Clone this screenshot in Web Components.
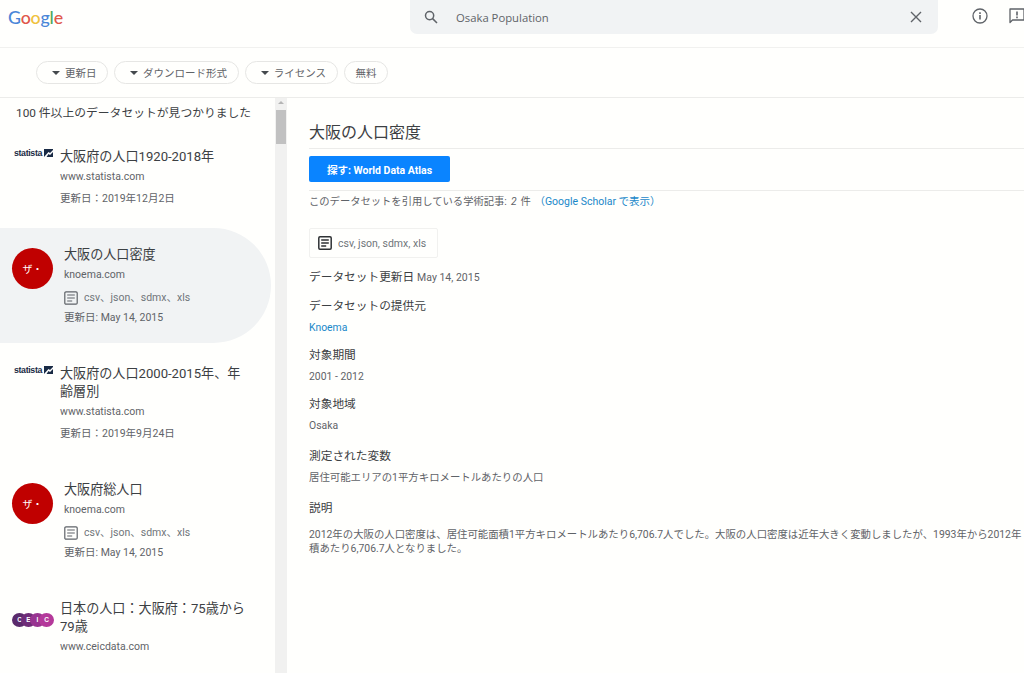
<!DOCTYPE html>
<html lang="ja">
<head>
<meta charset="utf-8">
<title>Dataset Search</title>
<style>
  html, body { margin: 0; height: 100%; overflow: hidden; background: #fffffd; }
  body {
    display: flex;
    flex-direction: column;
    font-family: Roboto, "Noto Sans CJK JP", sans-serif;
    color: #5f6368;
  }
</style>
</head>
<body>
<ds-header query="Osaka Population"></ds-header>
<ds-filter-bar>
  <ds-chip arrow>更新日</ds-chip>
  <ds-chip arrow>ダウンロード形式</ds-chip>
  <ds-chip arrow>ライセンス</ds-chip>
  <ds-chip>無料</ds-chip>
</ds-filter-bar>
<ds-main>
  <ds-result-list slot="list" count="100 件以上のデータセットが見つかりました">
    <ds-result logo="statista" title-text="大阪府の人口1920-2018年" url="www.statista.com" date="更新日：2019年12月2日" style="--top:22px;--bottom:22px;--right:21px"></ds-result>
    <ds-result logo="knoema" selected title-text="大阪の人口密度" url="knoema.com" formats="csv、json、sdmx、xls" date="更新日: May 14, 2015"></ds-result>
    <ds-result logo="statista" title-text="大阪府の人口2000-2015年、年齢層別" url="www.statista.com" date="更新日：2019年9月24日" style="--top:22px;--bottom:22px;--right:21px"></ds-result>
    <ds-result logo="knoema" title-text="大阪府総人口" url="knoema.com" formats="csv、json、sdmx、xls" date="更新日: May 14, 2015"></ds-result>
    <ds-result logo="ceic" title-text="日本の人口：大阪府：75歳から79歳" url="www.ceicdata.com" style="--top:22px;--bottom:22px;--right:21px"></ds-result>
  </ds-result-list>
  <ds-scrollbar slot="list"></ds-scrollbar>
  <ds-detail slot="detail" heading="大阪の人口密度">
    <ds-field label="データセットの提供元" link style="--gap:6px;--after:11px">Knoema</ds-field>
    <ds-field label="対象期間" style="--gap:6px;--after:11px">2001 - 2012</ds-field>
    <ds-field label="対象地域" style="--gap:6px;--after:14px">Osaka</ds-field>
    <ds-field label="測定された変数" style="--gap:6px;--after:14px">居住可能エリアの1平方キロメートルあたりの人口</ds-field>
    <ds-field label="説明" style="--gap:11px;--after:0px">2012年の大阪の人口密度は、居住可能面積1平方キロメートルあたり6,706.7人でした。大阪の人口密度は近年大きく変動しましたが、1993年から2012年<br>積あたり6,706.7人となりました。</ds-field>
  </ds-detail>
</ds-main>

<script>
const DOC_ICON = (color, weight) => `<svg width="14" height="14" viewBox="0 0 14 14" fill="none" stroke="${color}" stroke-width="${weight}">
    <rect x="0.8" y="0.8" width="12.4" height="12.4" rx="1.2"/>
    <path d="M3.200 4h7.600M3.200 7h7.600M3.200 10h5"/>
  </svg>`;

class DsHeader extends HTMLElement {
  constructor() {
    super();
    const shadowRoot = this.attachShadow({mode: 'open'});
    shadowRoot.innerHTML = `
      <style>
        :host {
          display: flex;
          flex: 0 0 auto;
          height: 47px;
          border-bottom: 1px solid #f1f1ef;
          overflow: hidden;
        }
        #logo {
          flex: 0 0 auto;
          width: 410px;
          padding: 1px 0 0 8px;
          box-sizing: border-box;
          font: 500 17.800px/32px Lato, sans-serif;
          letter-spacing: -0.2px;
        }
        #search {
          flex: 0 0 auto;
          width: 528px;
          height: 34px;
          box-sizing: border-box;
          background: #f1f3f4;
          border-radius: 0 0 7px 7px;
          display: flex;
          align-items: center;
          padding: 0 14px;
          font: 11.300px "Open Sans", sans-serif;
          color: #5f6368;
        }
        #query { flex: 1 1 auto; padding-left: 18px; }
        #actions {
          flex: 0 0 auto;
          display: flex;
          gap: 21px;
          padding: 8px 0 0 34px;
          align-items: flex-start;
        }
        svg { display: block; flex: 0 0 auto; }
      </style>
      <div id="logo"><span style="color:#4a86d8">G</span><span style="color:#e0574a">o</span><span style="color:#efc23e">o</span><span style="color:#4a86d8">g</span><span style="color:#4fa85e">l</span><span style="color:#e0574a">e</span></div>
      <div id="search">
        <svg width="14" height="14" viewBox="0 0 14 14" fill="none" stroke="#5f6368" stroke-width="1.5"><circle cx="5.6" cy="5.6" r="4.1"/><path d="M8.600 8.600l4.400 4.400"/></svg>
        <span id="query"></span>
        <svg width="12" height="12" viewBox="0 0 12 12" fill="none" stroke="#5f6368" stroke-width="1.4" style="margin-right:2px"><path d="M1 1l10 10M11 1L1 11"/></svg>
      </div>
      <div id="actions">
        <svg width="16" height="16" viewBox="0 0 16 16" fill="none" stroke="#5f6368"><circle cx="8" cy="8" r="7" stroke-width="1.3"/><path d="M8 7v4.600" stroke-width="1.6"/><path d="M8 4.200v1.700" stroke-width="1.6"/></svg>
        <svg width="16" height="16" viewBox="0 0 16 16" fill="none" stroke="#5f6368"><path d="M1 1h14v11H3.500L1 14.500z" stroke-width="1.3" stroke-linejoin="round"/><path d="M8 3.400v4.200M8 8.600v1.600" stroke-width="1.6"/></svg>
      </div>`;
  }
  connectedCallback() {
    this.shadowRoot.querySelector('#query').textContent = this.getAttribute('query');
  }
}

class DsFilterBar extends HTMLElement {
  constructor() {
    super();
    const shadowRoot = this.attachShadow({mode: 'open'});
    shadowRoot.innerHTML = `
      <style>
        :host {
          display: flex;
          flex: 0 0 auto;
          height: 49px;
          align-items: center;
          gap: 6px;
          padding: 0 0 0 36px;
          border-bottom: 1px solid #ececea;
        }
      </style>
      <slot></slot>`;
  }
}

class DsChip extends HTMLElement {
  constructor() {
    super();
    const shadowRoot = this.attachShadow({mode: 'open'});
    shadowRoot.innerHTML = `
      <style>
        :host {
          display: inline-flex;
          align-items: center;
          height: 23px;
          box-sizing: border-box;
          padding: 0 10.600px 0 11px;
          border: 1px solid #e6e6e4;
          border-radius: 12px;
          font: 10.500px Roboto, "Noto Sans CJK JP", sans-serif;
          color: #5f6368;
          white-space: nowrap;
        }
        #arrow {
          width: 0;
          height: 0;
          margin: 0 5px 0 4px;
          border-left: 4px solid transparent;
          border-right: 4px solid transparent;
          border-top: 4px solid #45494d;
        }
        :host(:not([arrow])) #arrow { display: none; }
      </style>
      <span id="arrow"></span><slot></slot>`;
  }
}

class DsMain extends HTMLElement {
  constructor() {
    super();
    const shadowRoot = this.attachShadow({mode: 'open'});
    shadowRoot.innerHTML = `
      <style>
        :host {
          display: flex;
          flex: 1 1 auto;
          min-height: 0;
          overflow: hidden;
        }
      </style>
      <slot name="list"></slot><slot name="detail"></slot>`;
  }
}

class DsResultList extends HTMLElement {
  constructor() {
    super();
    const shadowRoot = this.attachShadow({mode: 'open'});
    shadowRoot.innerHTML = `
      <style>
        :host {
          display: block;
          flex: 0 0 275px;
          width: 275px;
          overflow: hidden;
        }
        #count {
          height: 28px;
          padding-left: 16px;
          font-size: 11.800px;
          line-height: 30px;
          color: #3c4043;
          white-space: nowrap;
        }
      </style>
      <div id="count"></div>
      <slot></slot>`;
  }
  connectedCallback() {
    this.shadowRoot.querySelector('#count').textContent = this.getAttribute('count');
  }
}

class DsResult extends HTMLElement {
  constructor() {
    super();
    const shadowRoot = this.attachShadow({mode: 'open'});
    shadowRoot.innerHTML = `
      <style>
        :host {
          display: flex;
          box-sizing: border-box;
          width: 271px;
          padding: var(--top, 18px) var(--right, 12px) var(--bottom, 18px) 0;
          border-radius: 0 58px 58px 0;
        }
        :host([selected]) { background: #f1f3f4; }
        #logo { flex: 0 0 auto; }
        #body { flex: 1 1 auto; min-width: 0; }
        #title {
          font-size: 13.100px;
          line-height: 18px;
          color: #3c4043;
        }
        .meta {
          font-size: 10.500px;
          line-height: 14px;
          color: #5f6368;
        }
        #url { margin-top: 4px; }
        #date { margin-top: 8px; }
        #formats {
          display: flex;
          align-items: center;
          margin-top: 9px;
          color: #70757a;
        }
        #formats svg { margin-right: 6px; }
        :host([formats]) #date { margin-top: 6px; }
        .statista {
          display: flex;
          align-items: center;
          margin: -1px 8px 0 14px;
          height: 10px;
          padding-top: 1px;
          width: 38px;
          font: 700 8.800px/10px "Liberation Sans", sans-serif;
          letter-spacing: -0.35px;
          color: #1a2b45;
        }
        .statista svg { margin-left: 1.500px; flex: 0 0 auto; }
        .knoema {
          width: 41px;
          height: 41px;
          margin: 2px 11px 0 12px;
          border-radius: 50%;
          background: #c00000;
          color: #fff;
          display: flex;
          align-items: center;
          justify-content: center;
          font: 10px/1 "Noto Sans CJK JP", sans-serif;
        }
        .ceic {
          display: flex;
          margin: 13px 8px 0 12px;
          width: 40px;
        }
        .ceic span {
          flex: 0 0 15px;
          height: 14px;
          margin-right: -6px;
          border-radius: 50%;
          color: #fff;
          font: 700 6.500px/14px "Liberation Sans", sans-serif;
          text-align: center;
        }
      </style>
      <div id="logo"></div>
      <div id="body">
        <div id="title"></div>
        <div id="url" class="meta"></div>
        <div id="formats" class="meta"></div>
        <div id="date" class="meta"></div>
      </div>`;
  }
  connectedCallback() {
    const root = this.shadowRoot;
    const logo = this.getAttribute('logo');
    const dlogo = root.querySelector('#logo');
    dlogo.className = logo;
    if(logo === 'statista') {
      dlogo.innerHTML = `statista<svg width="9" height="8" viewBox="0 0 9 8"><rect width="9" height="8" fill="#1a2b45"/><path d="M0 8l4.500-5 1.500 1L9 1v2L6 6 4.500 5 2.500 8z" fill="#fff"/></svg>`;
    }
    else if(logo === 'knoema') {
      dlogo.textContent = 'ザ・';
    }
    else {
      const colors = ['#5a2a6c', '#6f2c78', '#983490', '#b4399a'];
      dlogo.innerHTML = ['C', 'E', 'I', 'C'].map((c, i) => `<span style="background:${colors[i]}">${c}</span>`).join('');
    }
    root.querySelector('#title').textContent = this.getAttribute('title-text');
    root.querySelector('#url').textContent = this.getAttribute('url');
    const dformats = root.querySelector('#formats');
    if(this.hasAttribute('formats')) dformats.innerHTML = DOC_ICON('#5f6368', 1.2) + `<span>${this.getAttribute('formats')}</span>`;
    else dformats.remove();
    const ddate = root.querySelector('#date');
    if(this.hasAttribute('date')) ddate.textContent = this.getAttribute('date');
    else ddate.remove();
  }
}

class DsScrollbar extends HTMLElement {
  constructor() {
    super();
    const shadowRoot = this.attachShadow({mode: 'open'});
    shadowRoot.innerHTML = `
      <style>
        :host {
          display: block;
          flex: 0 0 12px;
          width: 12px;
          background: #f1f1f0;
          padding-top: 3px;
          box-sizing: border-box;
        }
        #arrow {
          width: 0;
          height: 0;
          margin: 0 auto;
          border-left: 3px solid transparent;
          border-right: 3px solid transparent;
          border-bottom: 3px solid #b5b5b5;
        }
        #thumb {
          width: 10px;
          height: 34px;
          margin: 6px auto 0;
          background: #c1c1c1;
        }
      </style>
      <div id="arrow"></div>
      <div id="thumb"></div>`;
  }
}

class DsDetail extends HTMLElement {
  constructor() {
    super();
    const shadowRoot = this.attachShadow({mode: 'open'});
    shadowRoot.innerHTML = `
      <style>
        :host {
          display: block;
          flex: 1 1 auto;
          min-width: 0;
          padding: 24px 0 0 22px;
          overflow: hidden;
        }
        h1 {
          margin: 0;
          height: 26px;
          font-size: 16px;
          font-weight: 400;
          line-height: 22px;
          color: #3c4043;
          border-bottom: 1px solid #ececea;
        }
        #explore {
          display: flex;
          align-items: center;
          justify-content: center;
          width: 141px;
          height: 26px;
          margin-top: 7px;
          border-radius: 2px;
          background: #0a84ff;
          color: #fff;
          font-size: 10.500px;
          font-weight: 700;
        }
        #rule { height: 1px; margin-top: 8px; background: #ececea; }
        #cite {
          margin-top: 3px;
          font-size: 10.300px;
          line-height: 16px;
          color: #5f6368;
          white-space: nowrap;
        }
        #cite em { margin: 0 1.500px; }
        #cite a { color: #1a88c9; text-decoration: none; font-size: 10.500px; margin-left: 1px; }
        #formats {
          display: flex;
          align-items: center;
          box-sizing: border-box;
          width: 129px;
          height: 30px;
          margin-top: 18px;
          padding-left: 8px;
          border: 1px solid #f1f1ef;
          border-radius: 2px;
          font-size: 10.500px;
          color: #70757a;
        }
        #formats svg { margin-right: 6px; }
        #updated {
          margin: 10px 0 10px;
          font-size: 11.700px;
          line-height: 18px;
          color: #3c4043;
        }
        #updated span { font-size: 10.500px; color: #5f6368; }
      </style>
      <h1></h1>
      <div id="explore">探す: World Data Atlas</div>
      <div id="rule"></div>
      <div id="cite">このデータセットを引用している学術記事: <em>2</em> 件 <a>（Google Scholar で表示）</a></div>
      <div id="formats">${DOC_ICON('#2f3235', 1.5)}<span>csv, json, sdmx, xls</span></div>
      <div id="updated">データセット更新日 <span>May 14, 2015</span></div>
      <slot></slot>`;
  }
  connectedCallback() {
    this.shadowRoot.querySelector('h1').textContent = this.getAttribute('heading');
  }
}

class DsField extends HTMLElement {
  constructor() {
    super();
    const shadowRoot = this.attachShadow({mode: 'open'});
    shadowRoot.innerHTML = `
      <style>
        :host {
          display: block;
          margin-bottom: var(--after, 10px);
        }
        #label {
          font-size: 11.700px;
          line-height: 18px;
          color: #3c4043;
        }
        #value {
          margin-top: var(--gap, 10px);
          font-size: 10.400px;
          line-height: 14px;
          color: #5f6368;
          white-space: nowrap;
        }
        :host([link]) #value { color: #1a88c9; }
      </style>
      <div id="label"></div>
      <div id="value"><slot></slot></div>`;
  }
  connectedCallback() {
    this.shadowRoot.querySelector('#label').textContent = this.getAttribute('label');
  }
}

customElements.define('ds-header', DsHeader);
customElements.define('ds-filter-bar', DsFilterBar);
customElements.define('ds-chip', DsChip);
customElements.define('ds-main', DsMain);
customElements.define('ds-result-list', DsResultList);
customElements.define('ds-result', DsResult);
customElements.define('ds-scrollbar', DsScrollbar);
customElements.define('ds-detail', DsDetail);
customElements.define('ds-field', DsField);
</script>
</body>
</html>
